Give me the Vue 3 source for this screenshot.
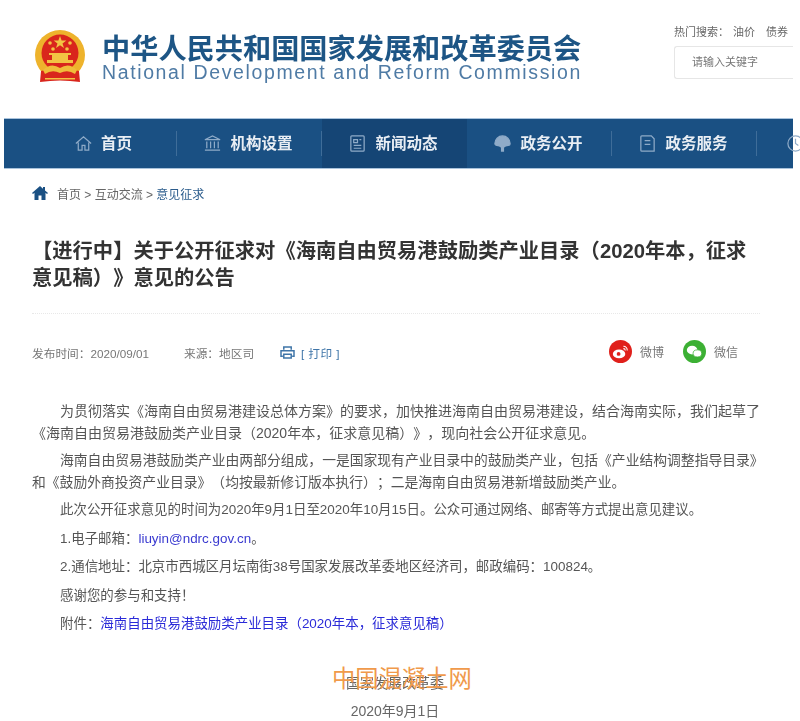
<template>
  <div class="page">
    <div class="content">
      <header class="top">
        <svg class="emblem" viewBox="0 0 50 54">
          <circle cx="25" cy="25" r="25" fill="#eeb32c" />
          <circle cx="25" cy="23" r="18.500" fill="#d9261c" />
          <path d="M6 41 Q25 35 44 41 L45 52 Q25 49 5 52Z" fill="#d9261c" />
          <path d="M8 40 Q16 32 25 38 Q34 32 42 40 L40 44 Q33 39 25 43 Q17 39 10 44Z" fill="#f0bd3a" />
          <path d="M12 30h26v3H12zM17 25h16v5H17zM14 23h22v2H14z" fill="#f2c443" />
          <path d="M10 48h30v1.500H10z" fill="#f2c443" />
          <path d="M25 6l1.600 4.600h4.800l-3.900 2.900 1.500 4.600-4-2.800-4 2.800 1.500-4.600-3.900-2.900h4.800z" fill="#f2c443" />
          <circle cx="15" cy="13" r="1.800" fill="#f2c443" />
          <circle cx="18" cy="19" r="1.800" fill="#f2c443" />
          <circle cx="35" cy="13" r="1.800" fill="#f2c443" />
          <circle cx="32" cy="19" r="1.800" fill="#f2c443" />
        </svg>
        <div class="brand">
          <div class="brand-cn">中华人民共和国国家发展和改革委员会</div>
          <div class="brand-en">National Development and Reform Commission</div>
        </div>
        <div class="search">
          <div class="hot"><span>热门搜索：</span><span class="first">油价</span><span class="second">债券</span></div>
          <div class="search-box">请输入关键字</div>
        </div>
      </header>

      <nav class="nav">
        <a v-for="item in navItems" :key="item.label" class="nav-item" :class="{ active: item.active }">
          <svg class="nav-icon" viewBox="0 0 20 20" fill="none" stroke="currentColor" stroke-width="1.300">
            <path :d="item.icon" :fill="item.filled ? 'currentColor' : 'none'" />
          </svg>
          <span>{{ item.label }}</span>
        </a>
        <a class="nav-item nav-last">
          <svg class="nav-icon" viewBox="0 0 20 20" fill="none" stroke="currentColor" stroke-width="1.300">
            <circle cx="10" cy="10" r="8" />
            <path d="M10 5v5l3 2" />
          </svg>
        </a>
      </nav>

      <div class="crumbs">
        <svg class="crumb-home" viewBox="0 0 16 14">
          <path d="M8 0L0 7l1 1 1.500-1.200V14h4V9.500h3V14h4V6.800L15 8l1-1-3-2.600V1h-2v1.700z" fill="#1a5083" />
        </svg>
        <span>首页 &gt; 互动交流 &gt; <b>意见征求</b></span>
      </div>

      <h1 class="title">【进行中】关于公开征求对《海南自由贸易港鼓励类产业目录（2020年本，征求意见稿）》意见的公告</h1>
      <div class="rule"></div>

      <div class="meta">
        <span class="date">发布时间：2020/09/01</span>
        <span class="source">来源：地区司</span>
        <svg class="print-icon" viewBox="0 0 16 14" fill="none" stroke="#3f75a8" stroke-width="1.600">
          <path d="M4 4V1h8v3M3 11H1V5h14v6h-2M4 9h8v4H4z" />
        </svg>
        <span class="print">[ 打印 ]</span>
        <span class="share weibo">
          <svg class="share-icon" viewBox="0 0 24 24">
            <circle cx="12" cy="12" r="12" fill="#e0201b" />
            <ellipse cx="10.500" cy="14.500" rx="6.500" ry="4.500" fill="#fff" />
            <circle cx="10" cy="14.500" r="2" fill="#e0201b" />
            <path d="M15 6.500a4 4 0 0 1 4 4.500M15 9a2 2 0 0 1 2 2" fill="none" stroke="#fff" stroke-width="1.100" />
          </svg>
          <span>微博</span>
        </span>
        <span class="share wechat">
          <svg class="share-icon" viewBox="0 0 24 24">
            <circle cx="12" cy="12" r="12" fill="#3cb034" />
            <ellipse cx="9.500" cy="10.500" rx="5.500" ry="4.500" fill="#fff" />
            <ellipse cx="15" cy="14" rx="4.500" ry="3.700" fill="#fff" stroke="#3cb034" stroke-width=".8" />
          </svg>
          <span>微信</span>
        </span>
      </div>

      <article class="body">
        <p class="lead">为贯彻落实《海南自由贸易港建设总体方案》的要求，加快推进海南自由贸易港建设，结合海南实际，我们起草了《海南自由贸易港鼓励类产业目录（2020年本，征求意见稿）》，现向社会公开征求意见。</p>
        <p class="lead second-lead">海南自由贸易港鼓励类产业由两部分组成，一是国家现有产业目录中的鼓励类产业，包括《产业结构调整指导目录》和《鼓励外商投资产业目录》（均按最新修订版本执行）；二是海南自由贸易港新增鼓励类产业。</p>
        <p>此次公开征求意见的时间为2020年9月1日至2020年10月15日。公众可通过网络、邮寄等方式提出意见建议。</p>
        <p>1.电子邮箱：<a class="mail">liuyin@ndrc.gov.cn</a>。</p>
        <p>2.通信地址：北京市西城区月坛南街38号国家发展改革委地区经济司，邮政编码：100824。</p>
        <p>感谢您的参与和支持！</p>
        <p>附件：<a class="attach">海南自由贸易港鼓励类产业目录（2020年本，征求意见稿）</a></p>
      </article>

      <footer class="sign">
        <div class="org">国家发展改革委</div>
        <div class="sign-date">2020年9月1日</div>
      </footer>
    </div>
    <div class="watermark">中国混凝土网</div>
  </div>
</template>

<script setup>
const navItems = [
  { label: '首页', icon: 'M2 10l8-7 8 7M4.500 9v8h4v-5h3v5h4V9' },
  { label: '机构设置', icon: 'M2 6l8-4 8 4zM4 8v7M8 8v7M12 8v7M16 8v7M2 17h16' },
  { label: '新闻动态', active: true, icon: 'M4 2h12a1 1 0 0 1 1 1v14a1 1 0 0 1-1 1H4a1 1 0 0 1-1-1V3a1 1 0 0 1 1-1zM6 6h4v3H6zM12 6h2M6 12h8M6 15h8' },
  { label: '政务公开', filled: true, icon: 'M2 10a8 8 0 0 1 16 0c0 1-1 2-2 2-2 0-4 1-5 2v4H9v-4c-1-1-3-2-5-2-1 0-2-1-2-2z' },
  { label: '政务服务', icon: 'M4 2h10l3 3v13H4a1 1 0 0 1-1-1V3a1 1 0 0 1 1-1zM7 7h6M7 11h6' }
];
</script>

<style>
body { background: #fff; }
</style>

<style scoped>
.page {
  position: relative;
  width: 800px;
  height: 721px;
  overflow: hidden;
  background: #fff;
  font-family: "Liberation Sans", "Noto Sans CJK SC", sans-serif;
  color: #4a4a4a;
  text-spacing-trim: space-all;
}
.content { filter: blur(0.7px); height: 721px; }
.top {
  display: flex;
  height: 118px;
  padding-left: 35px;
  box-sizing: border-box;
}
.emblem { width: 50px; height: 54px; margin-top: 30px; flex: none; }
.brand { margin: 33.500px 0 0 17px; width: 572px; }
.brand-cn { font-size: 28.200px; line-height: 30px; font-weight: 700; color: #1d5585; white-space: nowrap; }
.brand-en { font-size: 19.500px; line-height: 16px; letter-spacing: 1.620px; color: #4f7ba5; white-space: nowrap; }
.search { padding-top: 24px; width: 119px; }
.hot { display: flex; font-size: 11px; line-height: 16px; color: #666; white-space: nowrap; }
.first { margin-left: 4px; }
.second { margin-left: 11px; }
.search-box {
  margin-top: 6px;
  height: 33px;
  border: 1px solid #e6e6e6;
  border-right: 0;
  border-radius: 3px 0 0 3px;
  padding-left: 17px;
  font-size: 11px;
  line-height: 31px;
  color: #777;
  box-sizing: border-box;
}
.nav {
  display: flex;
  margin: 0 7px 0 4px;
  height: 51px;
  padding-left: 28px;
  background: #1a5083;
  border: 1px solid #a9c3dc;
  border-width: 1px 0;
  box-sizing: border-box;
}
.nav-item {
  position: relative;
  display: flex;
  align-items: center;
  justify-content: center;
  gap: 8px;
  width: 145px;
  flex: none;
  padding: 0 3px 3px 0;
  box-sizing: border-box;
  font-size: 15.500px;
  font-weight: 700;
  color: #e9eef4;
}
.nav-item::after {
  content: "";
  position: absolute;
  right: 0;
  top: 12px;
  height: 25px;
  width: 1px;
  background: #3f6d99;
}
.nav-item.active { background: #154575; }
.nav-item.active::after { display: none; }
.nav-last { justify-content: flex-start; padding-left: 29px; width: 60px; }
.nav-last::after { display: none; }
.nav-icon { width: 19px; height: 19px; color: #8fabc8; margin-top: 3px; }
.crumbs {
  display: flex;
  align-items: center;
  gap: 9px;
  margin: 16px 0 0 32px;
  height: 16px;
  font-size: 12px;
  color: #666;
}
.crumbs b { font-weight: 400; color: #2b5c8c; }
.crumb-home { width: 16px; height: 14px; }
.title {
  margin: 37px 50px 0 32px;
  font-size: 20.300px;
  line-height: 26.500px;
  font-weight: 700;
  color: #333;
}
.rule { margin: 22px 40px 0 32px; border-top: 1px dotted #e8e8e8; }
.meta {
  display: flex;
  align-items: center;
  margin: 26px 62px 0 32px;
  height: 24px;
  font-size: 11.700px;
  color: #777;
}
.source { margin-left: 35px; }
.print-icon { width: 15px; height: 13px; margin-left: 26px; }
.print { margin-left: 6px; color: #3f75a8; letter-spacing: 0.400px; }
.share { display: flex; align-items: center; gap: 8px; margin-top: -2px; font-size: 12px; }
.weibo { margin-left: auto; }
.wechat { margin-left: 19px; }
.share-icon { width: 23px; height: 23px; }
.body { margin: 36px 30px 0 32px; font-size: 13.450px; line-height: 22px; color: #555; }
.body p { margin: 0 0 6.500px; text-indent: 28px; }
.body .lead { font-size: 14px; margin-bottom: 5.500px; }
.body .second-lead { font-size: 13.800px; }
.mail { color: #3a3ad0; }
.attach { color: #2a2ad8; }
.sign { margin-top: 37px; text-align: center; font-size: 14px; color: #666; padding-right: 10px; }
.org { line-height: 22px; }
.sign-date { margin-top: 7px; line-height: 20px; }
.watermark {
  position: absolute;
  left: 332px;
  top: 663px;
  font-size: 23.300px;
  line-height: 32px;
  color: #f09a4b;
}
</style>
